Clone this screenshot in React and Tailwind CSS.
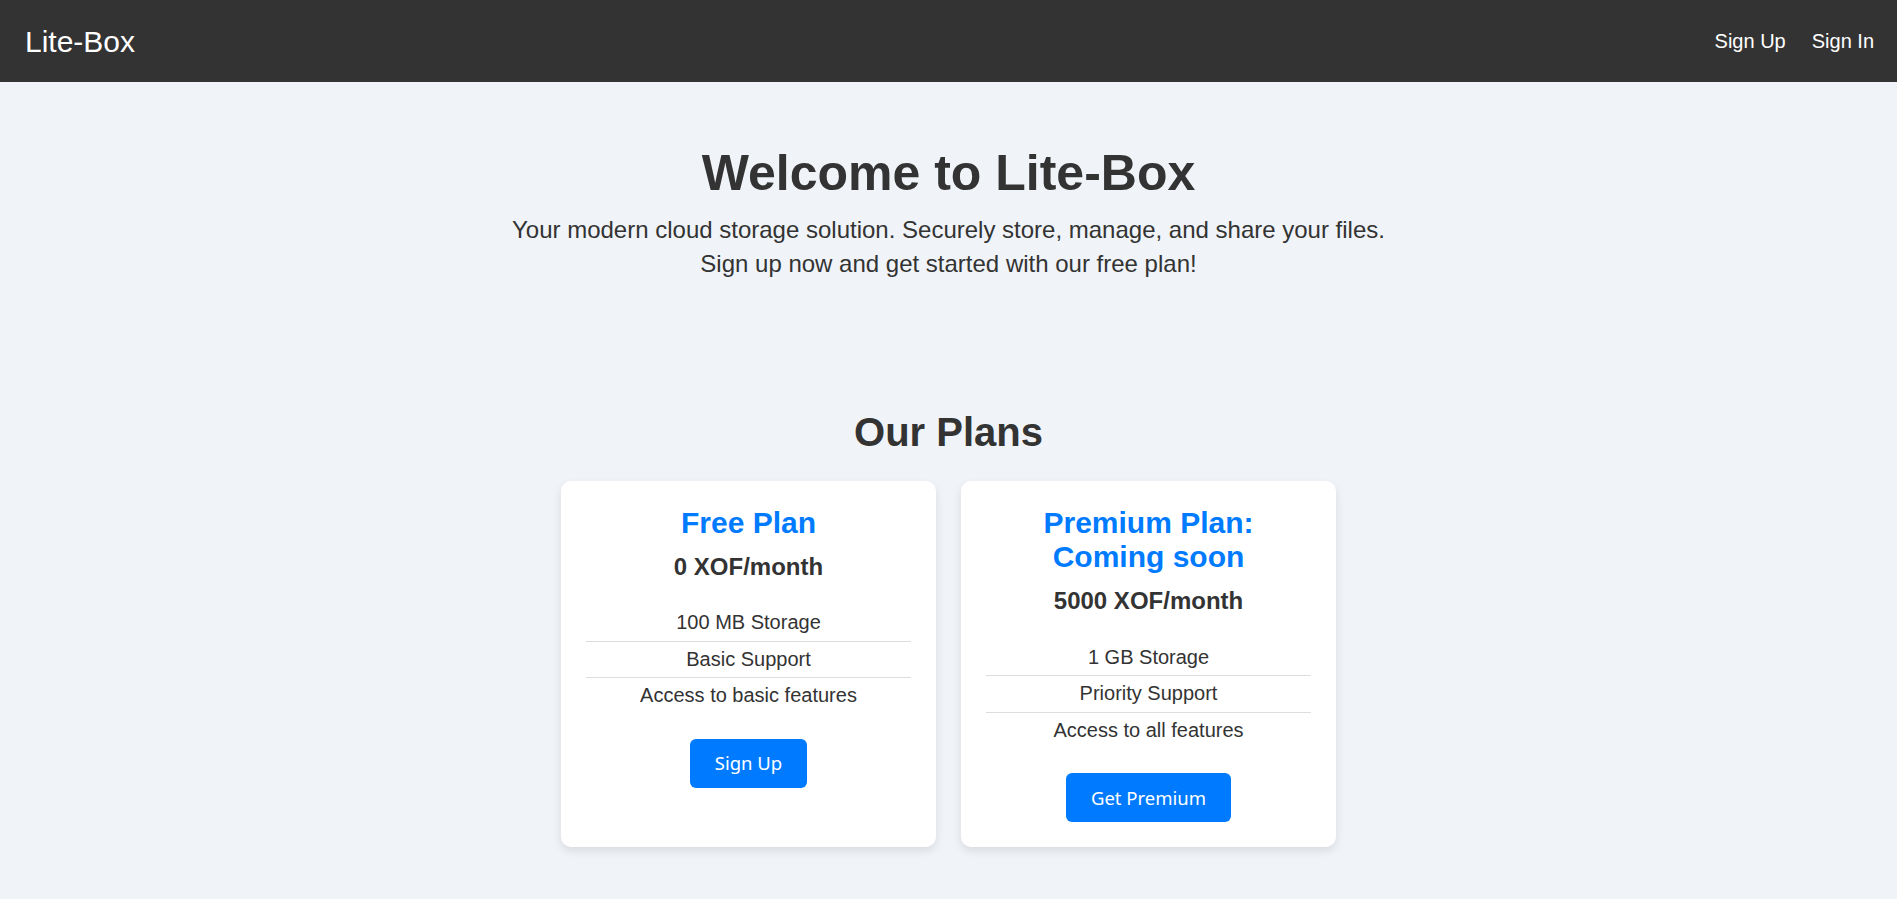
import React from "react";

const plans = [
  {
    title: ["Free Plan"],
    price: "0 XOF/month",
    features: ["100 MB Storage", "Basic Support", "Access to basic features"],
    cta: "Sign Up",
  },
  {
    title: ["Premium Plan:", "Coming soon"],
    price: "5000 XOF/month",
    features: ["1 GB Storage", "Priority Support", "Access to all features"],
    cta: "Get Premium",
  },
];

const PlanCard = ({ plan }) => (
  <div className="w-[375px] bg-white rounded-[10px] p-[25px] text-center shadow-[0_4px_10px_rgba(0,0,0,0.1)]">
    <h3 className="text-[30px] leading-[34.5px] font-bold text-[#007bff] mb-[12.5px]">
      {plan.title.map((line) => (
        <span key={line} className="block">
          {line}
        </span>
      ))}
    </h3>
    <p className="text-[24px] leading-[27.6px] font-bold text-[#333]">
      {plan.price}
    </p>
    <ul className="mt-[25px] text-[20px] leading-[23px] text-[#333]">
      {plan.features.map((f, i) => (
        <li
          key={f}
          className={`py-[6.25px] ${
            i < plan.features.length - 1 ? "border-b border-[#ddd]" : ""
          }`}
        >
          {f}
        </li>
      ))}
    </ul>
    <button
      type="button"
      className="mt-[25px] bg-[#007bff] text-white rounded-[6px] px-[25px] py-[12.5px] text-[18.5px] leading-[24px] font-['Noto_Sans',sans-serif]"
    >
      {plan.cta}
    </button>
  </div>
);

export default function App() {
  return (
    <div className="min-h-screen bg-[#f0f4f8] text-[#333] font-['Liberation_Sans',Arial,sans-serif]">
      {/* Navbar */}
      <nav className="h-[82px] bg-[#333] flex items-center justify-between pl-[25px] pr-[23px]">
        <span className="text-white text-[30px] leading-[35px]">Lite-Box</span>
        <div className="flex items-center gap-[26px] text-white text-[20px]">
          <a href="#">Sign Up</a>
          <a href="#">Sign In</a>
        </div>
      </nav>

      {/* Hero */}
      <section className="text-center pt-[63px]">
        <h1 className="text-[50px] leading-[57.5px] font-bold">
          Welcome to Lite-Box
        </h1>
        <p className="mt-[10px] text-[24px] leading-[34px]">
          Your modern cloud storage solution. Securely store, manage, and share
          your files.
          <br />
          Sign up now and get started with our free plan!
        </p>
      </section>

      {/* Plans */}
      <section className="text-center pt-[128px] pb-[40px]">
        <h2 className="text-[40px] leading-[46px] font-bold">Our Plans</h2>
        <div className="mt-[26px] flex justify-center gap-[25px]">
          {plans.map((p) => (
            <PlanCard key={p.cta} plan={p} />
          ))}
        </div>
      </section>
    </div>
  );
}
